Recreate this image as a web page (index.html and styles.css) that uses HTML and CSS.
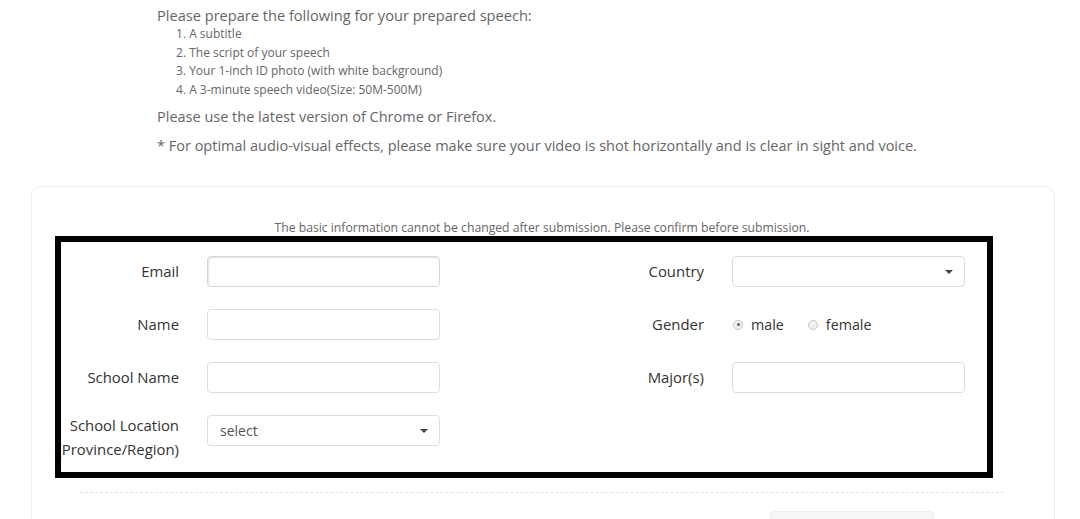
FILE: index.html
```
<!DOCTYPE html>
<html lang="en-us">
<head>
  <meta charset="utf-8">
  <title>Speech Registration</title>
  <link rel="stylesheet" href="styles.css">
</head>
<body>
  <div class="intro">
    <p class="intro-lead">Please prepare the following for your prepared speech:</p>
    <ol class="intro-list">
      <li>A subtitle</li>
      <li>The script of your speech</li>
      <li>Your 1-inch ID photo (with white background)</li>
      <li>A 3-minute speech video(Size: 50M-500M)</li>
    </ol>
    <p class="intro-note">Please use the latest version of Chrome or Firefox.</p>
    <p class="intro-note">* For optimal audio-visual effects, please make sure your video is shot horizontally and is clear in sight and voice.</p>
  </div>

  <div class="card">
    <div class="highlight"></div>
    <p class="notice">The basic information cannot be changed after submission. Please confirm before submission.</p>
    <div class="form">
      <div class="field">
        <label>Email</label>
        <input type="text" class="input input-email">
      </div>
      <div class="field">
        <label>Country</label>
        <div class="select"><span></span><span class="caret"></span></div>
      </div>
      <div class="field">
        <label>Name</label>
        <input type="text" class="input">
      </div>
      <div class="field">
        <label>Gender</label>
        <div class="radios">
          <span class="radio checked"></span><span class="radio-text">male</span>
          <span class="radio"></span><span class="radio-text">female</span>
        </div>
      </div>
      <div class="field">
        <label>School Name</label>
        <input type="text" class="input">
      </div>
      <div class="field">
        <label>Major(s)</label>
        <input type="text" class="input">
      </div>
      <div class="field">
        <label class="label-wrap">School Location (Province/Region)</label>
        <div class="select"><span>select</span><span class="caret"></span></div>
      </div>
    </div>
    <div class="divider"></div>
    <div class="actions"><span class="btn"></span></div>
  </div>
</body>
</html>
```

FILE: styles.css
```
body {
  margin: 0;
  font-family: "Open Sans", "Noto Sans", sans-serif;
  color: #666;
  background: #fff;
  overflow: hidden;
}
.intro {
  padding: 4px 0 0 157px;
}
.intro-lead {
  margin: 0;
  font-size: 14.6px;
  line-height: 22px;
}
.intro-list {
  margin: -1px 0 9px 0;
  padding-left: 19px;
  list-style: none;
  counter-reset: item;
  font-size: 12px;
  line-height: 18.5px;
}
.intro-list li {
  counter-increment: item;
}
.intro-list li::before {
  content: counter(item) ". ";
}
.intro-note {
  margin: 0 0 11px 0;
  font-size: 14.5px;
  line-height: 18px;
}

.card {
  position: relative;
  margin: 31px 0 0 31px;
  width: 1024px;
  height: 400px;
  border: 1px solid #ececec;
  border-radius: 10px;
  box-sizing: border-box;
  padding: 32px 50px 0 48px;
}
.highlight {
  position: absolute;
  left: 23px;
  top: 49px;
  width: 926px;
  height: 230px;
  border: 6px solid #000;
  pointer-events: none;
}
.notice {
  margin: 0;
  text-align: center;
  font-size: 12.2px;
  line-height: 18px;
  color: #666;
}

.form {
  margin: 19px 0 0 -26px;
  display: grid;
  grid-template-columns: 525px 386px;
  row-gap: 22px;
}
.field {
  display: flex;
  align-items: flex-start;
  gap: 28px;
}
.field label {
  width: 125px;
  flex: none;
  text-align: right;
  font-size: 14.9px;
  line-height: 23px;
  padding-top: 4px;
  color: #333;
}
.field .label-wrap {
  padding-top: 0;
  margin-top: -2px;
  line-height: 24px;
}
.input {
  width: 233px;
  height: 31px;
  box-sizing: border-box;
  border: 1px solid #ddd;
  border-radius: 4px;
  margin: 0;
  padding: 0 12px;
  font-family: inherit;
  background: #fff;
}
.input-email {
  border-color: #d6d6d6;
  box-shadow: inset 1px 1px 2px rgba(0, 0, 0, 0.12);
}
.select {
  width: 233px;
  height: 31px;
  box-sizing: border-box;
  border: 1px solid #ddd;
  border-radius: 4px;
  padding: 0 11px 0 12px;
  display: flex;
  align-items: center;
  justify-content: space-between;
  font-size: 14px;
  color: #555;
}
.caret {
  width: 0;
  height: 0;
  border-left: 4px solid transparent;
  border-right: 4px solid transparent;
  border-top: 4px solid #444;
}
.radios {
  display: flex;
  align-items: center;
  height: 31px;
  font-size: 14.3px;
  color: #333;
  padding-left: 1px;
}
.radio {
  width: 10px;
  height: 10px;
  border: 1px solid #c4c4c4;
  border-radius: 50%;
  background: #f0f0f0;
  box-sizing: border-box;
  position: relative;
}
.radio.checked::after {
  content: "";
  position: absolute;
  left: 2.5px;
  top: 2.5px;
  width: 3px;
  height: 3px;
  border-radius: 50%;
  background: #666;
}
.radio-text {
  margin: 0 24px 0 8px;
}

.divider {
  margin-top: 31px;
  border-top: 1px dashed #e2e2e2;
}
.actions {
  padding: 18px 0 0 690px;
}
.btn {
  display: block;
  width: 162px;
  height: 36px;
  background: #f6f6f6;
  border: 1px solid #eee;
  border-radius: 3px;
}
```
